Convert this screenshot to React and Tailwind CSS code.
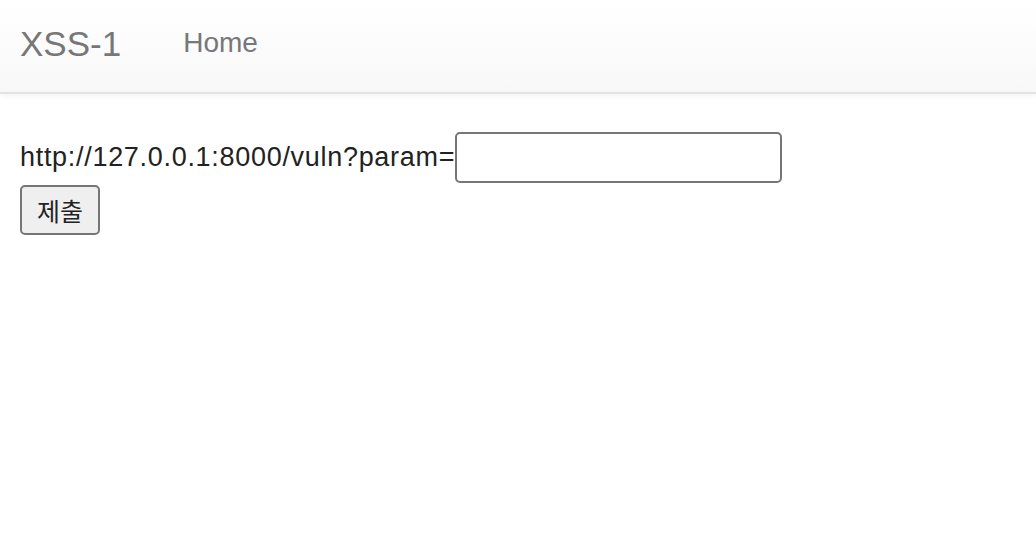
export default function App() {
  return (
    <div className="min-h-[550px] bg-white font-['Liberation_Sans',Arial,sans-serif] text-[#333]">
      {/* navbar */}
      <nav className="flex items-start h-[94px] px-[20px] border-b-2 border-[#e3e3e3] bg-gradient-to-b from-white to-[#f8f8f8] shadow-[0_2px_6px_rgba(0,0,0,0.05)]">
        <a className="mt-[26px] text-[35px] leading-none text-[#777]">XSS-1</a>
        <a className="ml-[62px] mt-[29px] text-[28px] leading-none text-[#777]">Home</a>
      </nav>

      <div className="px-[20px] pt-[38px]">
        <form className="flex flex-col items-start">
          <div className="flex items-center">
            <span className="text-[27px] leading-none tracking-[0.7px] text-[#222]">http://127.0.0.1:8000/vuln?param=</span>
            <input
              type="text"
              className="w-[327px] h-[51px] border-2 border-[#767676] rounded-[5px] bg-white outline-none"
            />
          </div>
          <button
            type="button"
            className="mt-[2px] w-[80px] h-[50px] border-2 border-[#767676] rounded-[5px] bg-[#efefef] text-[25px] leading-none text-[#222] font-['Noto_Sans_CJK_KR',sans-serif]"
          >
            제출
          </button>
        </form>
      </div>
    </div>
  )
}
